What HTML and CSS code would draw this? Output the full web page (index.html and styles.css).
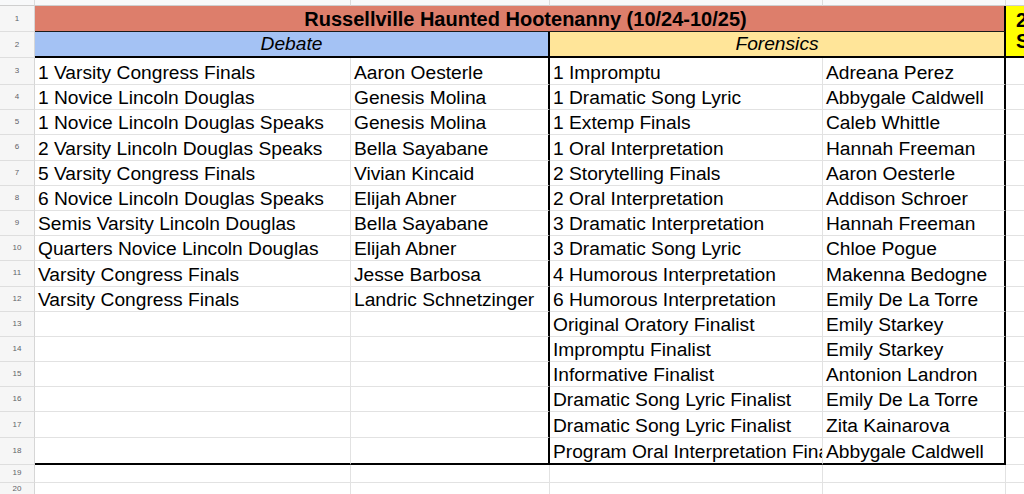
FILE: index.html
```html
<!DOCTYPE html>
<html>
<head>
<meta charset="utf-8">
<link rel="stylesheet" href="styles.css">
</head>
<body>
<div class="viewport">
<div class="sheet">
  <!-- column header strip -->
  <div class="c hd corner"></div>
  <div class="c hd"></div>
  <div class="c hd"></div>
  <div class="c hd"></div>
  <div class="c hd"></div>
  <div class="c hd"></div>

  <!-- row 1 -->
  <div class="c rh">1</div>
  <div class="c title">Russellville Haunted Hootenanny (10/24-10/25)</div>
  <div class="c sweep">2nd Place<br>Sweepstakes</div>

  <!-- row 2 -->
  <div class="c rh">2</div>
  <div class="c sec debate">Debate</div>
  <div class="c sec forensics">Forensics</div>

  <!-- row 3 -->
  <div class="c rh">3</div>
  <div class="c">1 Varsity Congress Finals</div>
  <div class="c rb">Aaron Oesterle</div>
  <div class="c">1 Impromptu</div>
  <div class="c rb">Adreana Perez</div>
  <div class="c"></div>

  <div class="c rh">4</div>
  <div class="c">1 Novice Lincoln Douglas</div>
  <div class="c rb">Genesis Molina</div>
  <div class="c">1 Dramatic Song Lyric</div>
  <div class="c rb">Abbygale Caldwell</div>
  <div class="c"></div>

  <div class="c rh">5</div>
  <div class="c">1 Novice Lincoln Douglas Speaks</div>
  <div class="c rb">Genesis Molina</div>
  <div class="c">1 Extemp Finals</div>
  <div class="c rb">Caleb Whittle</div>
  <div class="c"></div>

  <div class="c rh">6</div>
  <div class="c">2 Varsity Lincoln Douglas Speaks</div>
  <div class="c rb">Bella Sayabane</div>
  <div class="c">1 Oral Interpretation</div>
  <div class="c rb">Hannah Freeman</div>
  <div class="c"></div>

  <div class="c rh">7</div>
  <div class="c">5 Varsity Congress Finals</div>
  <div class="c rb">Vivian Kincaid</div>
  <div class="c">2 Storytelling Finals</div>
  <div class="c rb">Aaron Oesterle</div>
  <div class="c"></div>

  <div class="c rh">8</div>
  <div class="c">6 Novice Lincoln Douglas Speaks</div>
  <div class="c rb">Elijah Abner</div>
  <div class="c">2 Oral Interpretation</div>
  <div class="c rb">Addison Schroer</div>
  <div class="c"></div>

  <div class="c rh">9</div>
  <div class="c">Semis Varsity Lincoln Douglas</div>
  <div class="c rb">Bella Sayabane</div>
  <div class="c">3 Dramatic Interpretation</div>
  <div class="c rb">Hannah Freeman</div>
  <div class="c"></div>

  <div class="c rh">10</div>
  <div class="c">Quarters Novice Lincoln Douglas</div>
  <div class="c rb">Elijah Abner</div>
  <div class="c">3 Dramatic Song Lyric</div>
  <div class="c rb">Chloe Pogue</div>
  <div class="c"></div>

  <div class="c rh">11</div>
  <div class="c">Varsity Congress Finals</div>
  <div class="c rb">Jesse Barbosa</div>
  <div class="c">4 Humorous Interpretation</div>
  <div class="c rb">Makenna Bedogne</div>
  <div class="c"></div>

  <div class="c rh">12</div>
  <div class="c">Varsity Congress Finals</div>
  <div class="c rb">Landric Schnetzinger</div>
  <div class="c">6 Humorous Interpretation</div>
  <div class="c rb">Emily De La Torre</div>
  <div class="c"></div>

  <div class="c rh">13</div>
  <div class="c"></div>
  <div class="c rb"></div>
  <div class="c">Original Oratory Finalist</div>
  <div class="c rb">Emily Starkey</div>
  <div class="c"></div>

  <div class="c rh">14</div>
  <div class="c"></div>
  <div class="c rb"></div>
  <div class="c">Impromptu Finalist</div>
  <div class="c rb">Emily Starkey</div>
  <div class="c"></div>

  <div class="c rh">15</div>
  <div class="c"></div>
  <div class="c rb"></div>
  <div class="c">Informative Finalist</div>
  <div class="c rb">Antonion Landron</div>
  <div class="c"></div>

  <div class="c rh">16</div>
  <div class="c"></div>
  <div class="c rb"></div>
  <div class="c">Dramatic Song Lyric Finalist</div>
  <div class="c rb">Emily De La Torre</div>
  <div class="c"></div>

  <div class="c rh">17</div>
  <div class="c"></div>
  <div class="c rb"></div>
  <div class="c">Dramatic Song Lyric Finalist</div>
  <div class="c rb">Zita Kainarova</div>
  <div class="c"></div>

  <div class="c rh">18</div>
  <div class="c bb"></div>
  <div class="c rb bb"></div>
  <div class="c bb">Program Oral Interpretation Finalist</div>
  <div class="c rb bb">Abbygale Caldwell</div>
  <div class="c"></div>

  <div class="c rh">19</div>
  <div class="c"></div>
  <div class="c"></div>
  <div class="c"></div>
  <div class="c"></div>
  <div class="c"></div>

  <div class="c rh last">20</div>
  <div class="c"></div>
  <div class="c"></div>
  <div class="c"></div>
  <div class="c"></div>
  <div class="c"></div>
</div>
</div>
</body>
</html>
```

FILE: styles.css
```css
html, body {
  margin: 0;
  padding: 0;
  background: #ffffff;
}

.viewport {
  width: 1024px;
  height: 494px;
  overflow: hidden;
}

.sheet {
  display: grid;
  grid-template-columns: 35px 316px 199px 273px 183px 200px;
  grid-template-rows: 6px 26px 26px 27px repeat(14, 25.2px) 27px 18px 12px;
  width: 1206px;
  font-family: "Liberation Sans", Arial, sans-serif;
  font-size: 19.2px;
  color: #000000;
}

.c {
  box-sizing: border-box;
  border-right: 1px solid #e2e2e2;
  border-bottom: 1px solid #e2e2e2;
  display: flex;
  align-items: flex-end;
  padding: 0 0 0 3px;
  white-space: nowrap;
  overflow: hidden;
  line-height: 22px;
  min-width: 0;
}

.hd {
  background: #f8f9fa;
  border-bottom: 1px solid #cfcfcf;
  border-right: 1px solid #dcdcdc;
}

.rh {
  grid-column: 1;
  background: #f6f6f6;
  color: #5f6368;
  font-size: 8px;
  line-height: 10px;
  justify-content: center;
  align-items: center;
  padding: 0;
  border-right: 1px solid #d6d6d6;
  border-bottom: 1px solid #dedede;
}

.rh.last {
  border-bottom: none;
}

.title {
  grid-column: 2 / 6;
  background: #dd7e6b;
  font-weight: bold;
  font-size: 20px;
  justify-content: center;
  padding: 0 0 1px 12px;
  border-bottom: 1px solid #1a1a1a;
  border-right: 2px solid #000000;
}

.sweep {
  grid-column: 6;
  grid-row: 2 / 4;
  background: #ffff00;
  font-weight: bold;
  font-size: 20px;
  line-height: 21px;
  padding: 0 0 4px 10px;
  border-bottom: 2px solid #000000;
  border-right: none;
}

.sec {
  font-style: italic;
  justify-content: center;
  padding: 0 0 1px 0;
  border-bottom: 2px solid #000000;
  border-right: 2px solid #000000;
}

.debate {
  grid-column: 2 / 4;
  background: #a4c2f4;
}

.forensics {
  grid-column: 4 / 6;
  background: #ffe599;
}

.rb {
  border-right: 2px solid #000000;
}

.bb {
  border-bottom: 2px solid #000000;
}
```
